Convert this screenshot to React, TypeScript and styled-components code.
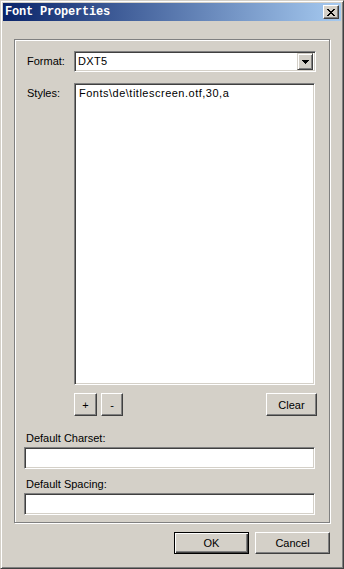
import React from "react";
import styled, { createGlobalStyle } from "styled-components";

const GlobalStyle = createGlobalStyle`
  html, body {
    margin: 0;
    padding: 0;
    background: #d4d0c8;
  }
  body {
    font-family: "Liberation Sans", Arial, sans-serif;
    font-size: 11px;
    color: #000;
  }
  * {
    box-sizing: border-box;
  }
`;

const Window = styled.div`
  width: 344px;
  height: 569px;
  display: flex;
  flex-direction: column;
  background: #d4d0c8;
  border: 1px solid;
  border-color: #d4d0c8 #404040 #404040 #d4d0c8;
  box-shadow: inset 1px 1px 0 #fff, inset -1px -1px 0 #808080;
  padding: 2px;
`;

const TitleBar = styled.div`
  height: 18px;
  display: flex;
  align-items: center;
  justify-content: space-between;
  padding: 0 2px;
  background: linear-gradient(to right, #0a246a, #a6caf0);
`;

const Title = styled.span`
  font-family: "Liberation Mono", "Courier New", monospace;
  font-weight: bold;
  font-size: 12px;
  letter-spacing: -0.2px;
  color: #fff;
  line-height: 18px;
`;

const CloseButton = styled.div`
  width: 16px;
  height: 14px;
  display: flex;
  align-items: center;
  justify-content: center;
  background: #d4d0c8;
  border: 1px solid;
  border-color: #fff #404040 #404040 #fff;
  box-shadow: inset -1px -1px 0 #808080;
`;

const Body = styled.div`
  flex: 1;
  display: flex;
  flex-direction: column;
  padding: 18px 11px 0 11px;
`;

const GroupBox = styled.div`
  width: 316px;
  height: 484px;
  display: flex;
  flex-direction: column;
  border: 1px solid #808080;
  box-shadow: inset 1px 1px 0 #fff, 1px 1px 0 #fff;
  padding: 11px 12px 0 9px;
`;

const FieldRow = styled.div`
  display: grid;
  grid-template-columns: 50px auto;
  align-items: ${(p: { top?: boolean }) => (p.top ? "start" : "center")};
  margin-top: ${(p: { top?: boolean }) => (p.top ? "11px" : "0")};
`;

const Label = styled.div<{ indent?: number; pad?: number }>`
  line-height: 13px;
  padding-left: ${(p) => p.indent ?? 3}px;
  padding-top: ${(p) => p.pad ?? 0}px;
`;

const Sunken = styled.div`
  background: #fff;
  border: 1px solid;
  border-color: #808080 #fff #fff #808080;
  box-shadow: inset 1px 1px 0 #404040, inset -1px -1px 0 #d4d0c8;
`;

const Combo = styled(Sunken)`
  width: 242px;
  height: 21px;
  display: flex;
  align-items: center;
  padding: 2px 2px 2px 3px;
`;

const ComboText = styled.span`
  flex: 1;
  line-height: 13px;
  letter-spacing: 0.3px;
`;

const DropButton = styled.div`
  width: 16px;
  height: 17px;
  display: flex;
  align-items: center;
  justify-content: center;
  background: #d4d0c8;
  border: 1px solid;
  border-color: #d4d0c8 #404040 #404040 #d4d0c8;
  box-shadow: inset 1px 1px 0 #fff, inset -1px -1px 0 #808080;
`;

const ListBox = styled(Sunken)`
  width: 241px;
  height: 302px;
  padding: 3px 3px;
`;

const ListItem = styled.div`
  line-height: 13px;
  padding-left: 1px;
  letter-spacing: 0.5px;
`;

const ButtonRow = styled.div`
  display: flex;
  align-items: center;
  gap: 4px;
  margin-top: 8px;
  padding-left: 50px;
`;

const Button = styled.button<{ w: number; h?: number; isDefault?: boolean }>`
  width: ${(p) => p.w}px;
  height: ${(p) => p.h ?? 23}px;
  padding: 0;
  margin: 0;
  font-family: inherit;
  font-size: 11px;
  color: #000;
  background: #d4d0c8;
  border: 1px solid;
  border-color: ${(p) =>
    p.isDefault ? "#000" : "#fff #404040 #404040 #fff"};
  box-shadow: ${(p) =>
    p.isDefault
      ? "inset 1px 1px 0 #fff, inset -1px -1px 0 #404040, inset -2px -2px 0 #808080"
      : "inset -1px -1px 0 #808080"};
  display: flex;
  align-items: center;
  justify-content: center;
`;

const PushRight = styled(Button)`
  margin-left: auto;
`;

const TextBox = styled(Sunken)`
  width: 291px;
  height: 22px;
`;

const Caption = styled(Label)`
  margin-top: ${(p) => p.pad ?? 0}px;
  padding-top: 0;
  margin-bottom: 2px;
`;

const Footer = styled.div`
  display: flex;
  justify-content: flex-end;
  gap: 6px;
  margin-top: 9px;
`;

const CloseIcon = () => (
  <svg width="8" height="7" viewBox="0 0 8 7" shapeRendering="crispEdges">
    <path d="M0 0h2v1h1v1h2v-1h1v-1h2v1h-1v1h-1v1h-1v1h1v1h1v1h1v1h-2v-1h-1v-1h-2v1h-1v1h-2v-1h1v-1h1v-1h1v-1h-1v-1h-1v-1h-1z" fill="#000" />
  </svg>
);

const ArrowIcon = () => (
  <svg width="7" height="4" viewBox="0 0 7 4" shapeRendering="crispEdges">
    <path d="M0 0h7v1h-1v1h-1v1h-1v1h-1v-1h-1v-1h-1v-1h-1z" fill="#000" />
  </svg>
);

export default function App() {
  return (
    <>
      <GlobalStyle />
      <Window>
        <TitleBar>
          <Title>Font Properties</Title>
          <CloseButton>
            <CloseIcon />
          </CloseButton>
        </TitleBar>
        <Body>
          <GroupBox>
            <FieldRow>
              <Label>Format:</Label>
              <Combo>
                <ComboText>DXT5</ComboText>
                <DropButton>
                  <ArrowIcon />
                </DropButton>
              </Combo>
            </FieldRow>
            <FieldRow top>
              <Label pad={4}>Styles:</Label>
              <ListBox>
                <ListItem>Fonts\de\titlescreen.otf,30,a</ListItem>
              </ListBox>
            </FieldRow>
            <ButtonRow>
              <Button w={23}>+</Button>
              <Button w={22}>-</Button>
              <PushRight w={51}>Clear</PushRight>
            </ButtonRow>
            <Caption indent={2} pad={16}>
              Default Charset:
            </Caption>
            <TextBox />
            <Caption indent={2} pad={9}>
              Default Spacing:
            </Caption>
            <TextBox />
          </GroupBox>
          <Footer>
            <Button w={75} h={22} isDefault>
              OK
            </Button>
            <Button w={75} h={22}>
              Cancel
            </Button>
          </Footer>
        </Body>
      </Window>
    </>
  );
}
